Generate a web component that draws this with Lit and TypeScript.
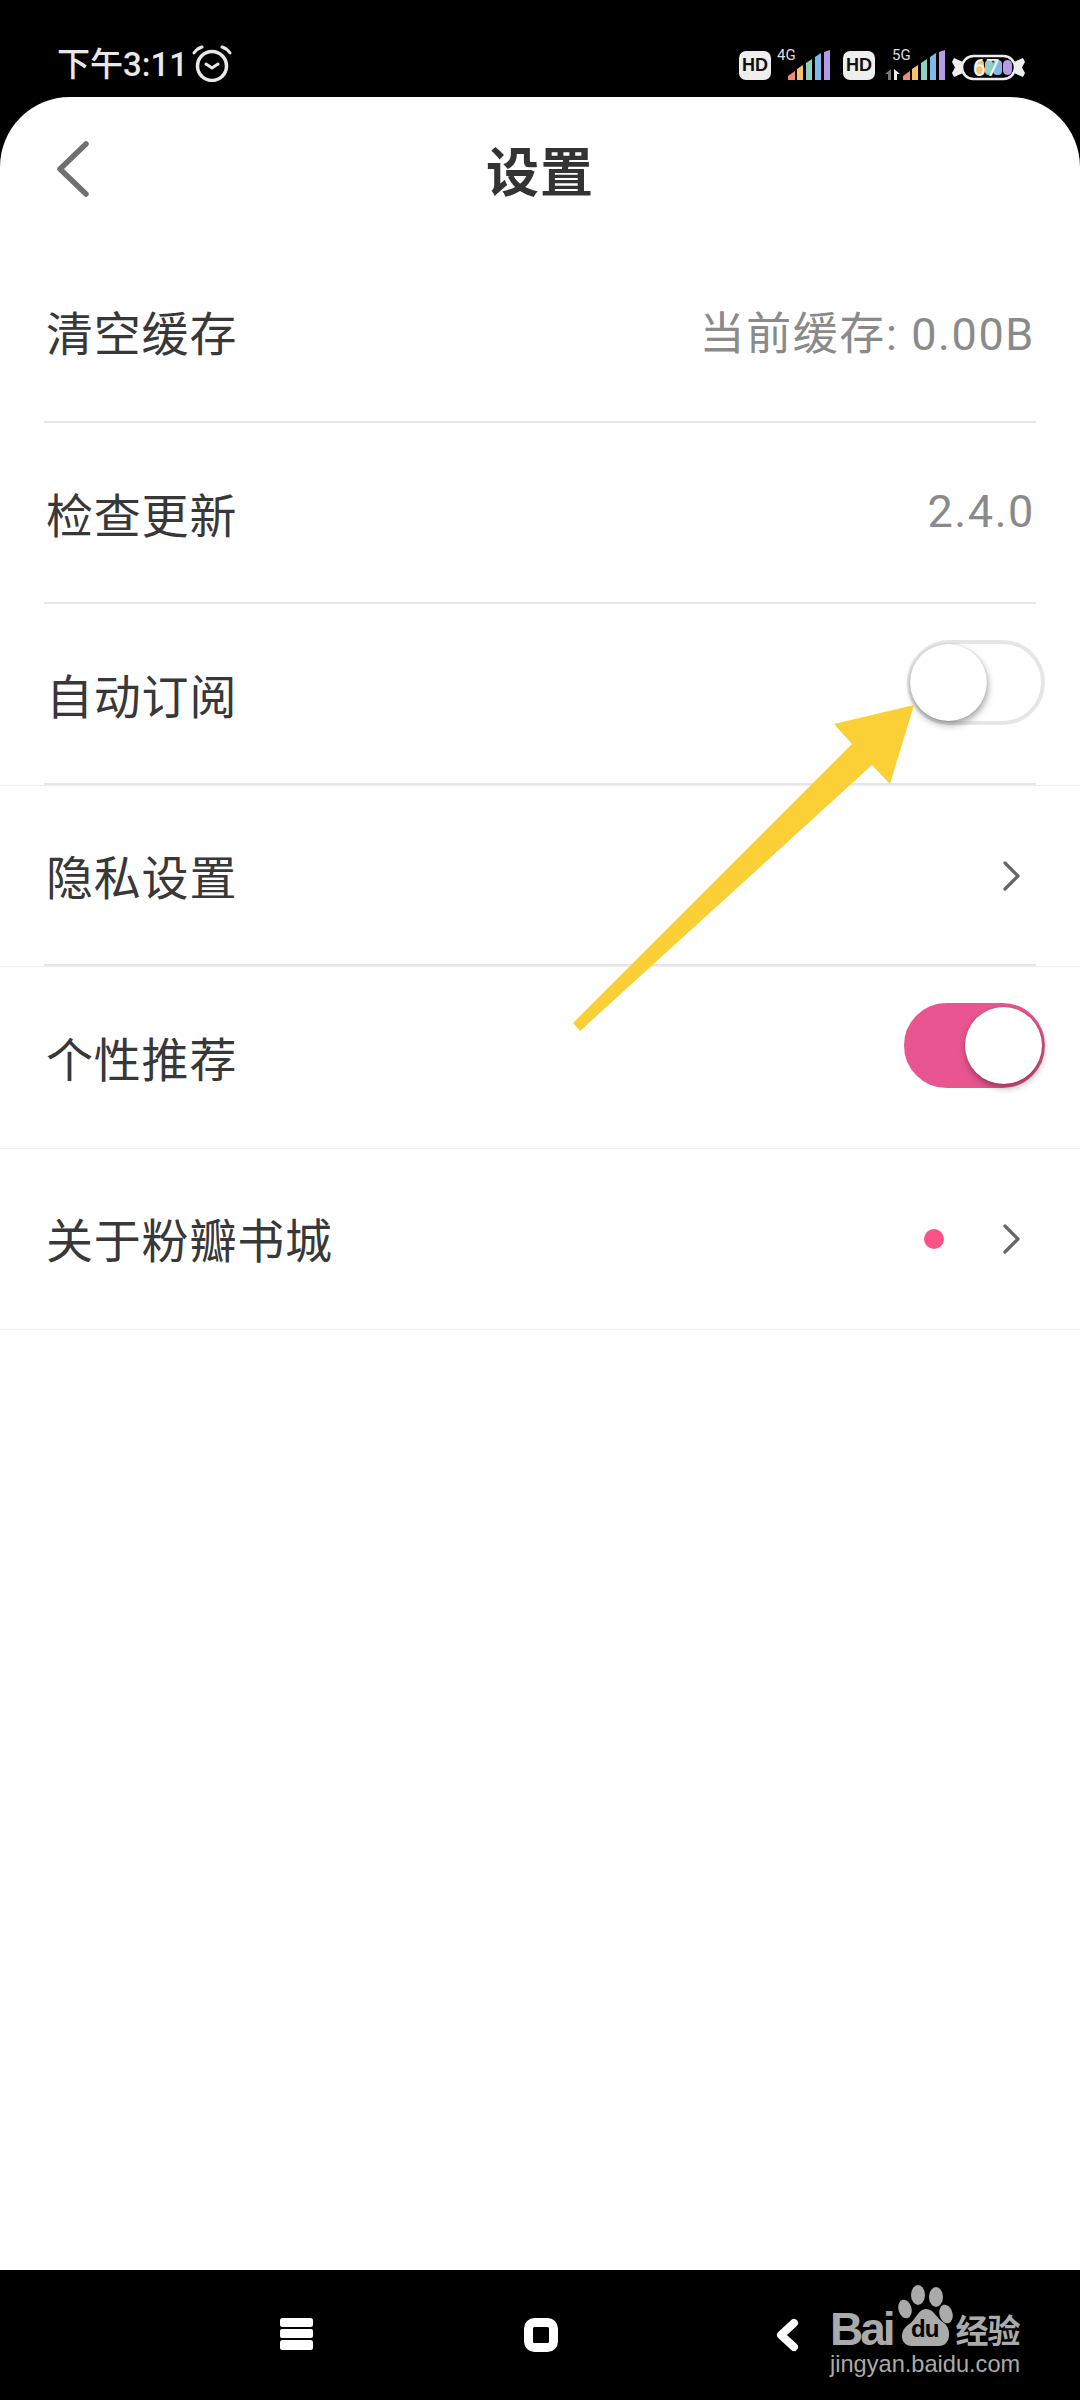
import { LitElement, html, css, svg } from "lit";
import { customElement } from "lit/decorators.js";

const BAR_COLORS = ["#f28b7a", "#f6c26b", "#8fd0c0", "#7fb8ec", "#b79ae6"];

// little stepped signal bars, used for both 4G and 5G
function signalBars() {
  return svg`<svg class="bars" width="42" height="30" viewBox="0 0 42 30">
    <path d="M0 30V26L7 21V30Z" fill="${BAR_COLORS[0]}"/>
    <path d="M9 30V19L15 15V30Z" fill="${BAR_COLORS[1]}"/>
    <path d="M18 30V13L24 9V30Z" fill="${BAR_COLORS[2]}"/>
    <path d="M27 30V7L33 3V30Z" fill="${BAR_COLORS[3]}"/>
    <path d="M36 30V2L42 0V30Z" fill="${BAR_COLORS[4]}"/>
  </svg>`;
}

const chevron = html`<svg class="chevron" width="18" height="30" viewBox="0 0 18 30">
  <path d="M3 2L16 15L3 28" fill="none" stroke="#666" stroke-width="3.2" stroke-linecap="round" stroke-linejoin="round"/>
</svg>`;

@customElement("status-bar")
class StatusBar extends LitElement {
  static styles = css`
    :host {
      display: flex;
      align-items: center;
      justify-content: space-between;
      height: 97px;
      box-sizing: border-box;
      padding: 32px 55px 0 57px;
      background: #000;
      color: #e8e8e8;
      font-family: "Roboto", "Noto Sans CJK SC", sans-serif;
    }
    .left { display: flex; align-items: center; gap: 4px; }
    .left svg { margin-bottom: 2px; }
    .time { font-size: 33px; line-height: 40px; font-weight: 500; }
    .right { display: flex; align-items: flex-end; height: 30px; }
    .hd {
      width: 32px;
      height: 29px;
      border-radius: 7px;
      background: #eee;
      color: #111;
      font: 800 18px/29px "Liberation Sans", sans-serif;
      text-align: center;
    }
    .net { position: relative; width: 59px; height: 30px; }
    .net span {
      position: absolute;
      top: -3px;
      font: 15px/16px "Roboto", sans-serif;
      color: #ddd;
    }
    .bars { position: absolute; right: 0; bottom: 0; }
    .arrows { position: absolute; left: 10px; bottom: 0; }
    .second { margin-left: 13px; }
    .net5 { width: 70px; }
    .battery { margin: 0 0 -2px 7px; }
  `;

  render() {
    return html`
      <div class="left">
        <span class="time">下午3:11</span>
        <svg width="40" height="37" viewBox="0 0 40 37" fill="none" stroke="#e8e8e8" stroke-linecap="round">
          <circle cx="20" cy="21" r="14.5" stroke-width="3.5"/>
          <path d="M14 19L20 23L26 19" stroke-width="3"/>
          <path d="M2 8C4 5 7 3 10 2M38 8C36 5 33 3 30 2" stroke-width="3"/>
        </svg>
      </div>
      <div class="right">
        <div class="hd">HD</div>
        <div class="net"><span style="left:6px">4G</span>${signalBars()}</div>
        <div class="hd second">HD</div>
        <div class="net net5">
          <span style="left:17px">5G</span>
          <svg class="arrows" width="16" height="11" viewBox="0 0 16 11">
            <path d="M6 0V11H3V5H0Z" fill="#777"/>
            <path d="M9 0L15 5H12V11H9Z" fill="#eee"/>
          </svg>
          ${signalBars()}
        </div>
        <svg class="battery" width="73" height="29" viewBox="0 -2 73 29">
          <path d="M2 3L11 7V18L2 22L0 18L3 12.5L0 7ZM71 3L62 7V18L71 22L73 18L70 12.5L73 7Z" fill="#eee"/>
          <rect x="10" y="1" width="53" height="23" rx="11.5" fill="#000" stroke="#eee" stroke-width="2.5"/>
          <rect x="24" y="5" width="8" height="15" rx="4" fill="#f6c26b"/>
          <rect x="33" y="5" width="8" height="15" rx="4" fill="#8fd0c0"/>
          <rect x="41" y="5" width="9" height="15" rx="4" fill="#7fb8ec"/>
          <rect x="51" y="5" width="9" height="15" rx="4.5" fill="#b79ae6"/>
          <text x="34" y="21" text-anchor="middle" font-family="Roboto" font-size="24" fill="#f4f4f4">67</text>
        </svg>
      </div>
    `;
  }
}

@customElement("toggle-switch")
class ToggleSwitch extends LitElement {
  static properties = { on: { type: Boolean } };
  on = false;

  // the switches sit a bit above the middle of their rows
  static styles = css`
    :host { display: block; margin-bottom: 24px; }
    .track {
      position: relative;
      width: 138px;
      height: 85px;
      box-sizing: border-box;
      border-radius: 43px;
      border: 4px solid #e6e6e6;
      background: #fff;
    }
    .knob {
      position: absolute;
      top: 0;
      left: -1px;
      width: 77px;
      height: 77px;
      border-radius: 50%;
      background: #fff;
      box-shadow: 1px 4px 7px rgba(0, 0, 0, 0.34), 0 0 2px rgba(0, 0, 0, 0.18);
    }
    .track.on { width: 141px; background: #e9568f; border-color: #e9568f; }
    .track.on .knob { left: auto; right: -1px; }
  `;

  render() {
    return html`<div class="track ${this.on ? "on" : ""}"><div class="knob"></div></div>`;
  }
}

@customElement("app-root")
class AppRoot extends LitElement {
  static styles = css`
    :host {
      display: block;
      width: 1080px;
      height: 2400px;
      background: #000;
      overflow: hidden;
      position: relative;
      font-family: "Roboto", "Noto Sans CJK SC", sans-serif;
    }
    .page {
      display: flex;
      flex-direction: column;
      height: 2173px;
      background: #fff;
      border-radius: 70px 70px 0 0;
    }
    .title-bar {
      display: grid;
      grid-template-columns: 1fr auto 1fr;
      align-items: center;
      height: 143px;
      flex: none;
      padding-left: 55px;
      margin-bottom: 1px;
    }
    .title-bar h1 {
      margin: 0 0 0 -55px;
      font-size: 53px;
      font-weight: 700;
      color: #333;
      letter-spacing: 1px;
    }
    .row {
      display: flex;
      align-items: center;
      justify-content: space-between;
      height: 181.5px;
      flex: none;
      box-sizing: border-box;
      padding: 0 35px 0 46px;
      position: relative;
    }
    .row.full { border-bottom: 1px solid #eee; }
    .row.inset::after {
      content: "";
      position: absolute;
      left: 44px;
      width: 992px;
      bottom: 0;
      height: 2px;
      background: #e6e6e6;
    }
    .label { font-size: 47px; color: #383838; letter-spacing: 0.8px; margin-bottom: 2px; }
    .value { font-size: 45px; color: #8a8a8a; margin: 0 10px 3px 0; letter-spacing: 1.6px; }
    .end { display: flex; align-items: center; }
    .end .chevron { margin-right: 25px; }
    .dot { width: 20px; height: 20px; border-radius: 50%; background: #fc5285; margin-right: 58px; }
    .nav {
      position: relative;
      display: flex;
      align-items: flex-start;
      height: 130px;
      box-sizing: border-box;
      padding: 48px 0 0 280px;
      background: #000;
    }
    .nav .home { margin-left: 211px; }
    .nav .back { margin-left: 217px; }
    .mark { position: absolute; left: 830px; top: 15px; width: 195px; color: #aaa; }
    .wordmark { display: flex; align-items: flex-end; height: 61px; }
    .bai { font: 700 46px/33px "Liberation Sans", sans-serif; letter-spacing: -3px; }
    .paw { margin: 0 3px 0 5px; flex: none; }
    .paw text { font: 700 24px "Liberation Sans", sans-serif; letter-spacing: -1px; }
    .jy { font: 700 33px/33px "Noto Sans CJK SC", sans-serif; letter-spacing: -1px; }
    .url { font: 23.6px/30px "Liberation Sans", sans-serif; margin-top: 3px; }
    .arrow { position: absolute; left: 0; top: 0; pointer-events: none; }
  `;

  render() {
    return html`
      <status-bar></status-bar>
      <div class="page">
        <div class="title-bar">
          <svg width="36" height="60" viewBox="0 0 36 60">
            <path d="M31 5L5 30L31 55" fill="none" stroke="#707070" stroke-width="5.5" stroke-linecap="round" stroke-linejoin="round"/>
          </svg>
          <h1>设置</h1>
        </div>
        <div class="row inset"><span class="label">清空缓存</span><span class="value">当前缓存: 0.00B</span></div>
        <div class="row inset"><span class="label">检查更新</span><span class="value">2.4.0</span></div>
        <div class="row inset full"><span class="label">自动订阅</span><toggle-switch></toggle-switch></div>
        <div class="row inset full"><span class="label">隐私设置</span><div class="end">${chevron}</div></div>
        <div class="row full"><span class="label">个性推荐</span><toggle-switch on></toggle-switch></div>
        <div class="row full"><span class="label">关于粉瓣书城</span><div class="end"><i class="dot"></i>${chevron}</div></div>
      </div>
      <div class="nav">
        <svg width="33" height="32" viewBox="0 0 33 32" fill="#fff">
          <rect width="33" height="9" rx="2.5"/><rect y="11" width="33" height="9" rx="2"/><rect y="22" width="33" height="10" rx="2.5"/>
        </svg>
        <svg class="home" width="34" height="34" viewBox="0 0 34 34">
          <rect x="4.5" y="4.5" width="25" height="25" rx="6" fill="none" stroke="#fff" stroke-width="9"/>
        </svg>
        <svg class="back" width="24" height="34" viewBox="0 0 24 34">
          <path d="M19 5L6 17L19 29" fill="none" stroke="#fff" stroke-width="8" stroke-linecap="round" stroke-linejoin="round"/>
        </svg>
        <div class="mark">
          <div class="wordmark">
            <span class="bai">Bai</span>
            <svg class="paw" width="55" height="61" viewBox="0 0 55 61" fill="#aaa">
              <ellipse cx="20" cy="10" rx="7" ry="10"/>
              <ellipse cx="38" cy="12" rx="7" ry="10"/>
              <ellipse cx="7" cy="24" rx="6.5" ry="9.5" transform="rotate(-15 7 24)"/>
              <ellipse cx="48" cy="29" rx="6.5" ry="9.5" transform="rotate(-15 48 29)"/>
              <path d="M28 24C36 24 38 33 46 38C54 44 53 61 41 61H14C2 61 1 46 10 40C18 35 20 24 28 24Z"/>
              <text x="13" y="52" fill="#000">du</text>
            </svg>
            <span class="jy">经验</span>
          </div>
          <div class="url">jingyan.baidu.com</div>
        </div>
      </div>
      <svg class="arrow" width="1080" height="2400">
        <path d="M914 705L834 724L852 744L573 1023L580 1031L872 765L890 784Z" fill="#fbcf36"/>
      </svg>
    `;
  }
}
